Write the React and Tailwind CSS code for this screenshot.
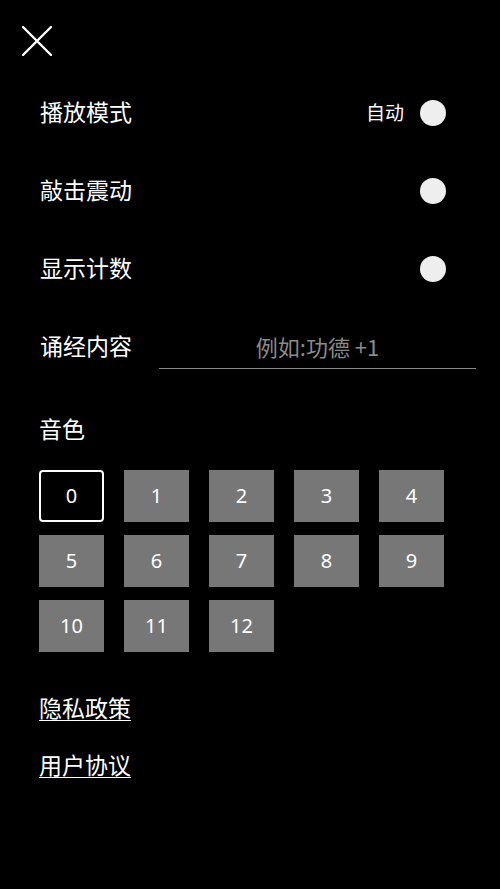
import React from "react";

const font = { fontFamily: '"Noto Sans", "Noto Sans CJK SC", sans-serif' };

function Dot() {
  return <div className="w-[26px] h-[26px] rounded-full bg-[#eeeeee]" />;
}

export default function App() {
  const tones = [0, 1, 2, 3, 4, 5, 6, 7, 8, 9, 10, 11, 12];
  return (
    <div
      className="w-[500px] h-[889px] bg-black text-white overflow-hidden"
      style={{ fontFamily: '"Noto Sans CJK SC", "Noto Sans", sans-serif' }}
    >
      <div className="pt-[26px] pl-[22px] h-[74px]">
        <svg width="30" height="30" viewBox="0 0 30 30">
          <path d="M1 1 L29 29 M29 1 L1 29" stroke="#ffffff" strokeWidth="2.4" strokeLinecap="round" />
        </svg>
      </div>

      <div className="pl-[40px] pr-[54px]">
        <div className="h-[78px] flex items-center justify-between">
          <span className="text-[23px] leading-[32px] pb-[4px]">播放模式</span>
          <div className="flex items-center gap-[16px]">
            <span className="text-[19px] leading-[28px] pb-[3px]">自动</span>
            <Dot />
          </div>
        </div>
        <div className="h-[78px] flex items-center justify-between">
          <span className="text-[23px] leading-[32px] pb-[4px]">敲击震动</span>
          <Dot />
        </div>
        <div className="h-[78px] flex items-center justify-between">
          <span className="text-[23px] leading-[32px] pb-[4px]">显示计数</span>
          <Dot />
        </div>
      </div>

      <div className="pl-[40px] h-[78px] flex items-center">
        <span className="text-[23px] leading-[32px] pb-[4px]">诵经内容</span>
        <div className="ml-[27px] w-[317px] h-[44px] border-b border-[#8a8a8a] flex items-center justify-center">
          <span className="text-[22px] leading-[30px] pb-[2px] text-[#8a8a8a]">例如:功德 +1</span>
        </div>
      </div>

      <div className="pl-[39px]">
        <div className="mt-[28px] h-[32px] flex items-center">
          <span className="text-[23px] leading-[32px] pb-[4px]">音色</span>
        </div>
        <div className="mt-[24px] grid grid-cols-[repeat(5,65px)] gap-x-[20px] gap-y-[13px]">
          {tones.map((t) =>
            t === 0 ? (
              <div
                key={t}
                className="h-[52px] border-2 border-white rounded-[4px] bg-black flex items-center justify-center text-[20px]"
                style={font}
              >
                {t}
              </div>
            ) : (
              <div
                key={t}
                className="h-[52px] bg-[#777777] flex items-center justify-center text-[20px]"
                style={font}
              >
                {t}
              </div>
            )
          )}
        </div>
        <div className="mt-[41px] h-[32px] flex items-center">
          <span className="text-[23px] leading-[28px] mb-[4px] underline underline-offset-[3px] decoration-1">隐私政策</span>
        </div>
        <div className="mt-[25px] h-[32px] flex items-center">
          <span className="text-[23px] leading-[28px] mb-[4px] underline underline-offset-[3px] decoration-1">用户协议</span>
        </div>
      </div>
    </div>
  );
}
